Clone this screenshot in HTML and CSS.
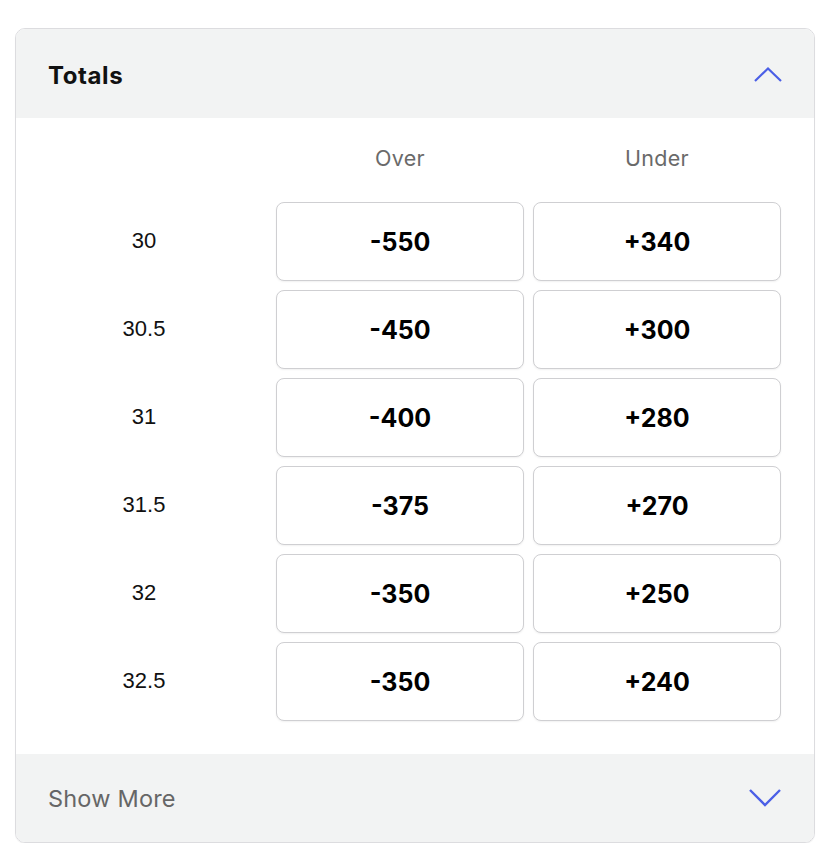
FILE: index.html
```html
<!DOCTYPE html>
<html>
<head>
<meta charset="utf-8">
<link rel="stylesheet" href="styles.css">
</head>
<body>
<div class="card">
  <div class="card-head">
    <span class="title">Totals</span>
    <svg class="chev" width="30" height="18" viewBox="0 0 30 18"><path d="M2 15 L15 2.5 L28 15" fill="none" stroke="#4b5fe6" stroke-width="2.2"/></svg>
  </div>
  <div class="card-body">
    <div class="grid">
      <div></div><div class="colhead">Over</div><div class="colhead">Under</div>
      <div class="label">30</div><button class="odd">-550</button><button class="odd">+340</button>
      <div class="label">30.5</div><button class="odd">-450</button><button class="odd">+300</button>
      <div class="label">31</div><button class="odd">-400</button><button class="odd">+280</button>
      <div class="label">31.5</div><button class="odd">-375</button><button class="odd">+270</button>
      <div class="label">32</div><button class="odd">-350</button><button class="odd">+250</button>
      <div class="label">32.5</div><button class="odd">-350</button><button class="odd">+240</button>
    </div>
  </div>
  <div class="card-foot">
    <span class="more">Show More</span>
    <svg class="chev" width="34" height="22" viewBox="0 0 34 22"><path d="M2 4 L17 19 L32 4" fill="none" stroke="#4b5fe6" stroke-width="2.4"/></svg>
  </div>
</div>
</body>
</html>
```
FILE: styles.css
```css
html, body { margin: 0; padding: 0; background: #fff; }
body { padding: 28px 15px 0 15px; font-family: "Inter", "Liberation Sans", sans-serif; }
.card {
  width: 800px;
  box-sizing: border-box;
  border: 1px solid #dcdcdf;
  border-radius: 10px;
  overflow: hidden;
  box-shadow: 0 1px 1px rgba(0,0,0,0.06);
}
.card-head, .card-foot {
  background: #f2f3f3;
  display: flex;
  align-items: center;
  justify-content: space-between;
  padding: 0 32px 0 32px;
}
.card-head { height: 89px; padding-top: 3px; box-sizing: border-box; }
.card-foot { height: 88px; }
.title { font-family: "Inter", sans-serif; font-weight: 700; font-size: 24px; color: #111; letter-spacing: 0.6px; }
.more { font-family: "Inter", sans-serif; font-size: 23.5px; color: #666; letter-spacing: 0.2px; }
.card-head .chev { margin-right: -1px; }
.card-foot .chev { margin-top: -2px; }
.card-body { padding: 28px 32px 33px 32px; background: #fff; }
.grid {
  display: grid;
  grid-template-columns: 219px 248px 248px;
  column-gap: 9px;
  row-gap: 9px;
}
.colhead {
  text-align: center;
  font-size: 21.5px;
  color: #6a6a6a;
  line-height: 24px;
  margin-bottom: 23px;
  letter-spacing: 0.3px;
}
.label {
  padding-right: 27px;
  display: flex;
  align-items: center;
  justify-content: center;
  font-family: "Liberation Sans", sans-serif;
  font-size: 22px;
  color: #111;
  padding-bottom: 1px;
}
.odd {
  height: 79px;
  border: 1px solid #cfcfd2;
  border-radius: 8px;
  background: #fff;
  font-family: "Inter", sans-serif;
  font-weight: 700;
  font-size: 25px;
  color: #000;
  box-shadow: 0 1px 2px rgba(0,0,0,0.06);
  padding: 0;
}
```
